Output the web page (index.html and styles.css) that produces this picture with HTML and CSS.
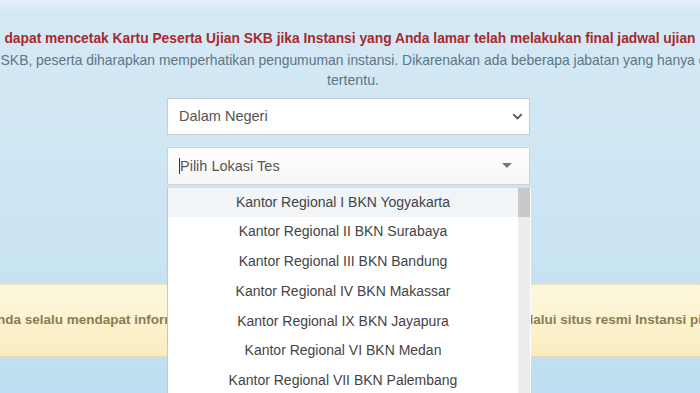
FILE: index.html
```html
<!DOCTYPE html>
<html lang="id">
<head>
    <meta charset="UTF-8">
    <title>Cetak Kartu Ujian SKB</title>
    <link rel="stylesheet" href="styles.css">
</head>
<body>
    <section class="page">
        <div class="notice">
            <p class="notice-line notice-warning">dapat mencetak Kartu Peserta Ujian SKB jika Instansi yang Anda lamar telah melakukan final jadwal ujian</p>
            <p class="notice-line notice-middle">ujian SKB, peserta diharapkan memperhatikan pengumuman instansi. Dikarenakan ada beberapa jabatan yang hanya dibuka</p>
            <p class="notice-line notice-end">tertentu.</p>
        </div>

        <div class="form">
            <div class="select">
                <span>Dalam Negeri</span>
                <svg class="chevron" width="11" height="7" viewBox="0 0 11 7"><path d="M1.2 1.2 L5.5 5.5 L9.8 1.2" fill="none" stroke="#555" stroke-width="1.8"/></svg>
            </div>

            <div class="select select-search">
                <span><i class="caret"></i>Pilih Lokasi Tes</span>
                <b class="arrow"></b>
            </div>

            <div class="dropdown">
                <ul class="options">
                    <li class="active">Kantor Regional I BKN Yogyakarta</li>
                    <li>Kantor Regional II BKN Surabaya</li>
                    <li>Kantor Regional III BKN Bandung</li>
                    <li>Kantor Regional IV BKN Makassar</li>
                    <li>Kantor Regional IX BKN Jayapura</li>
                    <li>Kantor Regional VI BKN Medan</li>
                    <li>Kantor Regional VII BKN Palembang</li>
                </ul>
                <div class="scrollbar"><div class="thumb"></div></div>
            </div>
        </div>

        <div class="info">
            <p class="info-line">Pastikan Anda selalu mendapat informasi terbaru mengenai jadwal serta lokasi ujian SKB, melalui situs resmi Instansi pilihan Anda</p>
        </div>
    </section>
</body>
</html>
```

FILE: styles.css
```css
body {
    margin: 0;
    height: 393px;
    overflow: hidden;
    font-family: "Liberation Sans", Arial, sans-serif;
    background: linear-gradient(to bottom, #e2eff7 0, #d5e9f5 12px, #cde5f3 200px, #bedff1 393px);
}

.page {
    padding-top: 29px;
}

.notice-line {
    display: flex;
    justify-content: center;
    margin: 0;
    white-space: nowrap;
    font-size: 14.2px;
    line-height: 20.5px;
    color: #5d7585;
}

.notice-warning {
    color: #a8292c;
    font-weight: bold;
    font-size: 13.8px;
}

.notice-middle {
    padding-left: 7px;
    font-size: 13.9px;
}

.notice-end {
    padding-left: 6px;
}

.form {
    position: relative;
    width: 363px;
    margin: 7px 0 0 167px;
}

.select {
    display: flex;
    align-items: center;
    justify-content: space-between;
    height: 35px;
    padding: 0 6px 0 11px;
    background-color: #fff;
    border: 1px solid #c6ccd0;
    font-size: 14.5px;
    color: #555;
}

.select-search {
    height: 36px;
    margin-top: 12px;
    padding-right: 17px;
    background: linear-gradient(to bottom, #fff 0, #f6f6f6 100%);
    border-color: #cfd3d6;
}

.caret {
    display: inline-block;
    width: 1px;
    height: 16px;
    vertical-align: -3px;
    background-color: #333;
}

.arrow {
    width: 0;
    height: 0;
    border-left: 5px solid transparent;
    border-right: 5px solid transparent;
    border-top: 5px solid #777;
}

.dropdown {
    position: absolute;
    z-index: 2;
    left: 0;
    top: 90px;
    display: flex;
    width: 363px;
    height: 220px;
    background-color: #fff;
    border-left: 1px solid #c4c8cc;
}

.options {
    flex: 1;
    margin: 0;
    padding: 0;
    list-style: none;
}

.options li {
    height: 29.8px;
    line-height: 29.8px;
    text-align: center;
    font-size: 14px;
    color: #444;
}

.options li.active {
    background-color: #f1f5f8;
}

.scrollbar {
    width: 12px;
    margin-right: 1px;
    background-color: #ececec;
}

.thumb {
    height: 29px;
    background-color: #c9c9c9;
}

.info {
    margin-top: 99px;
    height: 71px;
    background: linear-gradient(to bottom, #fdf7de 0, #fbf2cc 60%, #f9edbd 100%);
    border-top: 1px solid #efe6c2;
    border-bottom: 1px solid #e6dcb0;
}

.info-line {
    display: flex;
    justify-content: center;
    margin: 0;
    padding: 27px 1px 0 0;
    white-space: nowrap;
    font-size: 13.5px;
    font-weight: bold;
    color: #8c7b52;
}
```
